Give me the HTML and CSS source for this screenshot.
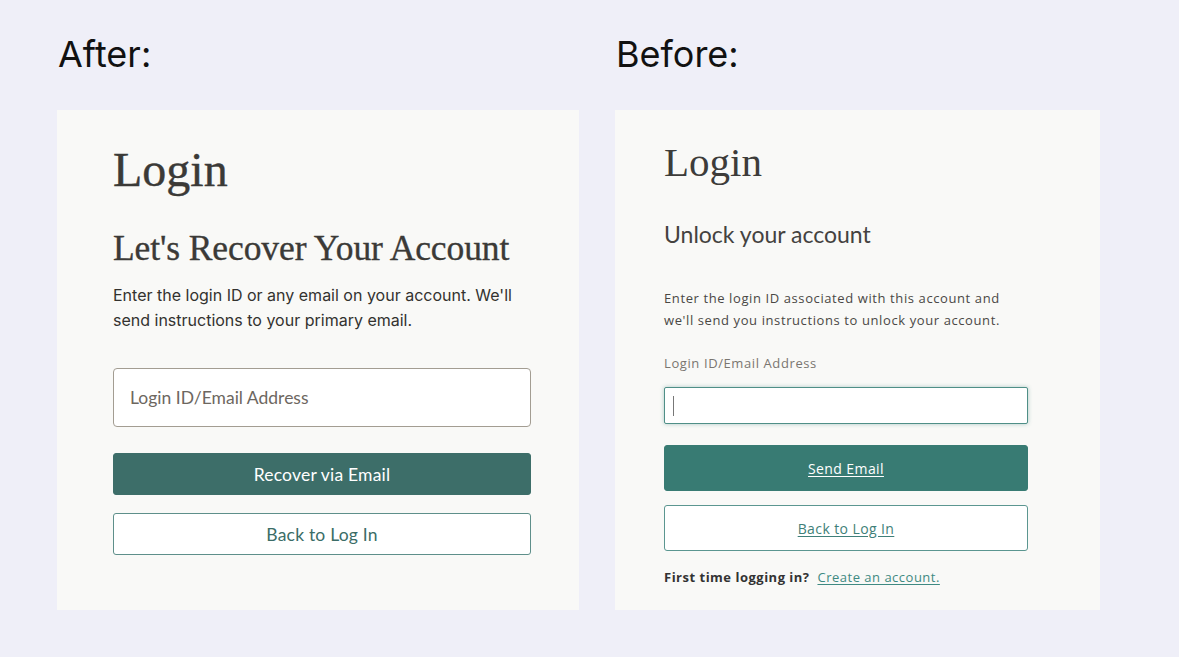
FILE: index.html
```html
<!DOCTYPE html>
<html lang="en">
<head>
<meta charset="utf-8">
<title>Login recovery – after / before</title>
<link rel="stylesheet" href="styles.css">
</head>
<body>
<div class="compare">
  <section class="col col-after">
    <h2 class="tag">After:</h2>
    <div class="card card-after">
      <h1 class="a-title">Login</h1>
      <h2 class="a-sub">Let's Recover Your Account</h2>
      <p class="a-text">Enter the login ID or any email on your account. We'll send instructions to your primary email.</p>
      <div class="a-input"><span class="a-placeholder">Login ID/Email Address</span></div>
      <button class="a-btn a-primary">Recover via Email</button>
      <button class="a-btn a-secondary">Back to Log In</button>
    </div>
  </section>
  <section class="col col-before">
    <h2 class="tag">Before:</h2>
    <div class="card card-before">
      <h1 class="b-title">Login</h1>
      <h2 class="b-sub">Unlock your account</h2>
      <p class="b-text">Enter the login ID associated with this account and we'll send you instructions to unlock your account.</p>
      <label class="b-label">Login ID/Email Address</label>
      <div class="b-input"><span class="b-caret"></span></div>
      <button class="b-btn b-primary"><span>Send Email</span></button>
      <button class="b-btn b-secondary"><span>Back to Log In</span></button>
      <p class="b-foot"><strong>First time logging in?</strong> <a class="b-link">Create an account.</a></p>
    </div>
  </section>
</div>
</body>
</html>
```
FILE: styles.css
```css
* { box-sizing: border-box; }
html, body { margin: 0; padding: 0; }
body {
  background: #efeff8;
  width: 1179px;
  height: 657px;
  overflow: hidden;
  font-family: Inter, "Liberation Sans", sans-serif;
}
.compare {
  display: flex;
  gap: 36px;
  padding-left: 57px;
}
.col { display: flex; flex-direction: column; }
.col-after { width: 522px; }
.col-before { width: 485px; }
.tag {
  margin: 0;
  height: 110px;
  padding-top: 30px;
  padding-left: 1px;
  font-family: Inter, sans-serif;
  font-weight: 400;
  font-size: 36px;
  line-height: 48px;
  color: #111;
}
.card {
  background: #f9f9f7;
  height: 500px;
  display: flex;
  flex-direction: column;
}

/* AFTER */
.card-after { padding: 34px 48px 0 56px; }
.a-title {
  margin: 0;
  font-family: "Liberation Serif", serif;
  font-weight: 400;
  font-size: 48px;
  line-height: 52px;
  color: #3b3a37;
  -webkit-text-stroke: 0.4px #3b3a37;
}
.a-sub {
  margin: 30px 0 0;
  font-family: "Liberation Serif", serif;
  font-weight: 400;
  font-size: 35.5px;
  line-height: 44px;
  color: #3b3a37;
  letter-spacing: -0.1px;
  -webkit-text-stroke: 0.35px #3b3a37;
}
.a-text {
  margin: 13px 0 0;
  font-family: Inter, sans-serif;
  font-size: 16px;
  line-height: 25px;
  color: #33322f;
}
.a-input {
  margin-top: 35px;
  height: 59px;
  background: #fff;
  border: 1px solid #a39d92;
  border-radius: 4px;
  display: flex;
  align-items: center;
  padding-left: 16px;
}
.a-placeholder {
  font-family: Lato, sans-serif;
  font-size: 17.5px;
  color: #6d675f;
}
.a-btn {
  display: block;
  width: 100%;
  height: 42px;
  border-radius: 3px;
  font-family: Lato, sans-serif;
  font-size: 17.5px;
  cursor: pointer;
}
.a-primary {
  margin-top: 26px;
  background: #3d6e69;
  border: 1px solid #3d6e69;
  color: #fff;
  font-weight: 400;
  letter-spacing: 0.2px;
}
.a-secondary {
  margin-top: 18px;
  background: #fff;
  border: 1px solid #5e8f8a;
  color: #3b6d67;
  letter-spacing: 0.2px;
}

/* BEFORE */
.card-before { padding: 28px 72px 0 49px; }
.b-title {
  margin: 0;
  font-family: "Liberation Serif", serif;
  font-weight: 400;
  font-size: 41px;
  line-height: 48px;
  color: #3d3c3a;
}
.b-sub {
  margin: 34px 0 0;
  font-family: Lato, sans-serif;
  font-weight: 400;
  font-size: 23px;
  line-height: 28px;
  color: #444240;
}
.b-text {
  margin: 39px 0 0;
  font-family: "Open Sans", sans-serif;
  font-size: 13px;
  line-height: 22px;
  letter-spacing: 0.6px;
  color: #4a4845;
}
.b-label {
  display: block;
  margin-top: 24px;
  font-family: "Open Sans", sans-serif;
  font-size: 13px;
  line-height: 16px;
  letter-spacing: 0.6px;
  color: #7a7670;
}
.b-input {
  margin-top: 16px;
  height: 37px;
  background: #fff;
  border: 1px solid #4f8f87;
  border-radius: 2px;
  box-shadow: 0 0 4px rgba(79, 143, 135, 0.45);
  display: flex;
  align-items: center;
  padding-left: 8px;
}
.b-caret {
  width: 1px;
  height: 20px;
  background: #777;
}
.b-btn {
  display: block;
  width: 100%;
  height: 46px;
  border-radius: 3px;
  font-family: "Open Sans", sans-serif;
  font-size: 14px;
  letter-spacing: 0.4px;
  cursor: pointer;
}
.b-btn span { text-decoration: underline; text-underline-offset: 2px; }
.b-primary {
  margin-top: 21px;
  background: #387b73;
  border: 1px solid #387b73;
  color: #fff;
}
.b-secondary {
  margin-top: 14px;
  background: #fff;
  border: 1px solid #5b9690;
  color: #3f7f79;
}
.b-foot {
  margin: 17px 0 0;
  font-family: "Open Sans", sans-serif;
  font-size: 13px;
  line-height: 18px;
  letter-spacing: 0.5px;
  color: #333;
}
.b-foot strong { font-weight: 700; }
.b-link {
  color: #3f8a82;
  text-decoration: underline;
  text-underline-offset: 2px;
  margin-left: 4px;
}
```
